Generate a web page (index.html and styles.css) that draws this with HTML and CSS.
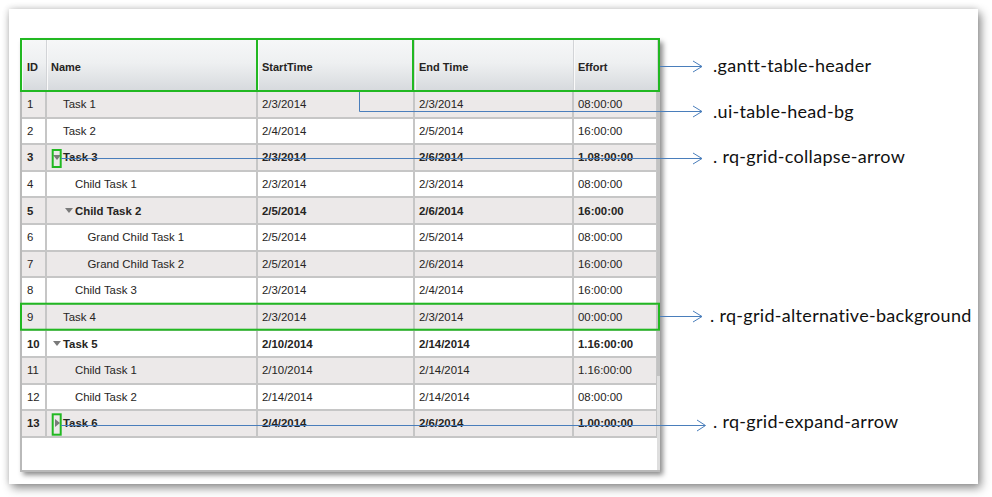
FILE: index.html
```html
<!DOCTYPE html>
<html>
<head>
<meta charset="utf-8">
<link rel="stylesheet" href="styles.css">
</head>
<body>
<div class="page">
  <div class="grid">
    <div class="head">
      <div class="hc id">ID</div>
      <div class="hc">Name</div>
      <div class="hc">StartTime</div>
      <div class="hc">End Time</div>
      <div class="hc">Effort</div>
    </div>
    <div class="body">
      <div class="row alt"><div class="c id">1</div><div class="c name l0"><span class="slot"></span>Task 1</div><div class="c">2/3/2014</div><div class="c">2/3/2014</div><div class="c">08:00:00</div></div>
      <div class="row"><div class="c id">2</div><div class="c name l0"><span class="slot"></span>Task 2</div><div class="c">2/4/2014</div><div class="c">2/5/2014</div><div class="c">16:00:00</div></div>
      <div class="row alt parent"><div class="c id">3</div><div class="c name l0"><span class="slot"><span class="tri-down"></span></span>Task 3</div><div class="c">2/3/2014</div><div class="c">2/6/2014</div><div class="c">1.08:00:00</div></div>
      <div class="row"><div class="c id">4</div><div class="c name l1"><span class="slot"></span>Child Task 1</div><div class="c">2/3/2014</div><div class="c">2/3/2014</div><div class="c">08:00:00</div></div>
      <div class="row alt parent"><div class="c id">5</div><div class="c name l1"><span class="slot"><span class="tri-down"></span></span>Child Task 2</div><div class="c">2/5/2014</div><div class="c">2/6/2014</div><div class="c">16:00:00</div></div>
      <div class="row"><div class="c id">6</div><div class="c name l2"><span class="slot"></span>Grand Child Task 1</div><div class="c">2/5/2014</div><div class="c">2/5/2014</div><div class="c">08:00:00</div></div>
      <div class="row alt"><div class="c id">7</div><div class="c name l2"><span class="slot"></span>Grand Child Task 2</div><div class="c">2/5/2014</div><div class="c">2/6/2014</div><div class="c">16:00:00</div></div>
      <div class="row"><div class="c id">8</div><div class="c name l1"><span class="slot"></span>Child Task 3</div><div class="c">2/3/2014</div><div class="c">2/4/2014</div><div class="c">16:00:00</div></div>
      <div class="row alt"><div class="c id">9</div><div class="c name l0"><span class="slot"></span>Task 4</div><div class="c">2/3/2014</div><div class="c">2/3/2014</div><div class="c">00:00:00</div></div>
      <div class="row parent"><div class="c id">10</div><div class="c name l0"><span class="slot"><span class="tri-down"></span></span>Task 5</div><div class="c">2/10/2014</div><div class="c">2/14/2014</div><div class="c">1.16:00:00</div></div>
      <div class="row alt"><div class="c id">11</div><div class="c name l1"><span class="slot"></span>Child Task 1</div><div class="c">2/10/2014</div><div class="c">2/14/2014</div><div class="c">1.16:00:00</div></div>
      <div class="row"><div class="c id">12</div><div class="c name l1"><span class="slot"></span>Child Task 2</div><div class="c">2/14/2014</div><div class="c">2/14/2014</div><div class="c">08:00:00</div></div>
      <div class="row alt parent"><div class="c id">13</div><div class="c name l0"><span class="slot"><span class="tri-right"></span></span>Task 6</div><div class="c">2/4/2014</div><div class="c">2/6/2014</div><div class="c">1.00:00:00</div></div>
    </div>
    <div class="scroll"></div>
  </div>

  <svg class="overlay" width="992" height="497" viewBox="0 0 992 497">
    <g fill="none" stroke="#22b822" stroke-width="2">
      <rect x="21" y="39" width="638" height="52"/>
      <line x1="257" y1="39" x2="257" y2="91"/>
      <line x1="413" y1="39" x2="413" y2="91"/>
      <rect x="21" y="303.7" width="638" height="26"/>
      <rect x="52.7" y="150" width="8" height="17"/>
      <rect x="52.7" y="414.3" width="8" height="20.4"/>
    </g>
    <g fill="none" stroke="#4a7ebb" stroke-width="1">
      <path d="M660 66.5H702M693 61L702 66.5L693 72"/>
      <path d="M359.5 92V111.5H702M693 106L702 111.5L693 117"/>
      <path d="M61 158.5H702M693 153L702 158.5L693 164"/>
      <path d="M660 316.5H702M693 311L702 316.5L693 322"/>
      <path d="M61 425.5H705M697 420L705.5 425.5L697 431"/>
    </g>
  </svg>
  <div class="label l-a">.gantt-table-header</div>
  <div class="label l-b">.ui-table-head-bg</div>
  <div class="label l-c">. rq-grid-collapse-arrow</div>
  <div class="label l-d">. rq-grid-alternative-background</div>
  <div class="label l-e">. rq-grid-expand-arrow</div>
</div>
</body>
</html>
```

FILE: styles.css
```css
html, body {
  margin: 0;
  padding: 0;
  background: #ffffff;
}
body {
  width: 992px;
  height: 497px;
  overflow: hidden;
}
.page {
  position: relative;
  margin: 9px 0 0 9px;
  width: 969px;
  height: 475px;
  box-sizing: border-box;
  padding: 30px 0 0 11px;
  background: #fff;
  box-shadow: 3px 4px 9px rgba(0,0,0,0.45), -1px -1px 6px rgba(0,0,0,0.12);
}
.grid {
  position: relative;
  width: 640px;
  height: 433px;
  box-sizing: border-box;
  border-top: 1px solid #a8a8a8;
  border-left: 2px solid #b9b9b9;
  border-bottom: 2px solid #b9b9b9;
  background: #fff;
  box-shadow: 3px 3px 5px rgba(0,0,0,0.45);
  font-family: "Liberation Sans", Arial, sans-serif;
  font-size: 11.4px;
  color: #262422;
}
.head, .row {
  display: grid;
  grid-template-columns: 25px 211px 157px 159px 84px;
}
.head {
  height: 52px;
  box-sizing: border-box;
  border-bottom: 1px solid #b8b8b8;
  background: linear-gradient(#f6f7f8 0%, #eef0f1 45%, #d6d9dd 100%);
}
.hc {
  display: flex;
  align-items: center;
  padding: 2px 0 0 4px;
  font-weight: bold;
  font-size: 11px;
  border-right: 1px solid #d2d4d7;
  box-shadow: inset 1px 0 0 #fafafa;
}
.hc.id { padding-left: 5px; }
.row {
  height: 26.6px;
  box-sizing: border-box;
  border-bottom: 2px solid #c6c6c6;
  background: #fff;
}
.row.alt { background: #ecE9e9; }
.row.parent { font-weight: bold; }
.c {
  display: flex;
  align-items: center;
  padding-left: 4px;
  border-right: 2px solid #c6c6c6;
  white-space: nowrap;
}
.c.id { padding-left: 5px; }
.name { padding-left: 5px; }
.name.l1 { padding-left: 17px; }
.name.l2 { padding-left: 29.5px; }
.slot {
  display: inline-flex;
  align-items: center;
  justify-content: center;
  width: 11px;
  height: 10px;
}
.tri-down {
  width: 0;
  height: 0;
  margin-left: -2px;
  border-left: 4px solid transparent;
  border-right: 4px solid transparent;
  border-top: 5px solid #7a7a7a;
}
.tri-right {
  width: 0;
  height: 0;
  margin-left: 0;
  border-top: 4px solid transparent;
  border-bottom: 4px solid transparent;
  border-left: 5px solid #7a7a7a;
}
.scroll {
  position: absolute;
  right: 0;
  top: 52px;
  width: 3px;
  bottom: 0;
  background: linear-gradient(#c2c2c2 0%, #c2c2c2 75%, #dedede 75%);
}
.overlay {
  position: absolute;
  left: -9px;
  top: -9px;
  pointer-events: none;
}
.label {
  position: absolute;
  font-family: Lato, "Open Sans", sans-serif;
  font-size: 18px;
  letter-spacing: 0.3px;
  line-height: 20px;
  color: #111;
  white-space: nowrap;
}
.l-a { left: 704px; top: 46px; }
.l-b { left: 704px; top: 92px; }
.l-c { left: 704px; top: 137px; }
.l-d { left: 701px; top: 296px; }
.l-e { left: 704px; top: 402px; }
```
